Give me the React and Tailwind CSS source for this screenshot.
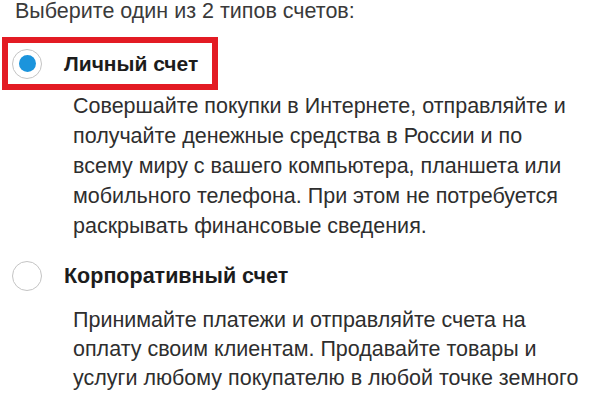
export default function App() {
  const personal = [
    'Совершайте покупки в Интернете, отправляйте и',
    'получайте денежные средства в России и по',
    'всему миру с вашего компьютера, планшета или',
    'мобильного телефона. При этом не потребуется',
    'раскрывать финансовые сведения.',
  ]
  const business = [
    'Принимайте платежи и отправляйте счета на',
    'оплату своим клиентам. Продавайте товары и',
    'услуги любому покупателю в любой точке земного',
  ]

  return (
    <div className="w-[600px] h-[400px] overflow-hidden bg-white text-[#2e2e2e] font-['Liberation_Sans',Arial,sans-serif]">
      <p className="pl-[15px] text-[21.5px] leading-[22px] text-[#3a3a3a] whitespace-nowrap">
        Выберите один из 2 типов счетов:
      </p>

      {/* Personal */}
      <div className="mt-[15px] ml-[2px] w-[216px] h-[53px] border-[6px] border-[#e31b23] flex items-center">
        <span className="ml-[4px] w-[30px] h-[30px] rounded-full border border-[#c4c4c4] bg-white flex items-center justify-center">
          <span className="w-[17px] h-[17px] rounded-full bg-[#1b94dc]" />
        </span>
        <span className="ml-[22px] text-[21px] font-bold text-[#1c1c1c] whitespace-nowrap">Личный счет</span>
      </div>
      <div className="mt-[1px] pl-[73px] text-[21.5px] leading-[30px] whitespace-nowrap">
        {personal.map((l, i) => (
          <div key={i}>{l}</div>
        ))}
      </div>

      {/* Business */}
      <div className="mt-[20px] pl-[12px] h-[30px] flex items-center">
        <span className="w-[30px] h-[30px] rounded-full border border-[#c4c4c4] bg-white" />
        <span className="ml-[22px] text-[21.5px] font-bold text-[#1c1c1c] whitespace-nowrap">Корпоративный счет</span>
      </div>
      <div className="mt-[15px] pl-[73px] text-[21.5px] leading-[29px] whitespace-nowrap">
        {business.map((l, i) => (
          <div key={i}>{l}</div>
        ))}
      </div>
    </div>
  )
}
